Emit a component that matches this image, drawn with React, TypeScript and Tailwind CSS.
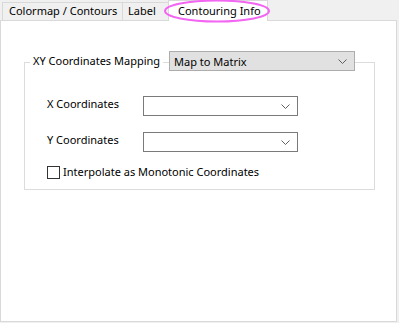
import React from "react";

function Chevron({ className = "" }: { className?: string }) {
  return (
    <svg width="9" height="5" viewBox="0 0 9 5" className={className}>
      <path d="M0.5 0.5 L4.5 4.5 L8.5 0.5" fill="none" stroke="#606060" strokeWidth="1" />
    </svg>
  );
}

function Combo({ value, className = "" }: { value?: string; className?: string }) {
  return (
    <div
      className={`flex h-[20px] shrink-0 items-center justify-between border pl-[4px] pr-[7px] ${className}`}
    >
      <span className="leading-none">{value ?? ""}</span>
      <Chevron />
    </div>
  );
}

export default function App() {
  return (
    <div
      className="relative h-[323px] w-[399px] overflow-hidden whitespace-nowrap bg-[#f0f0f0] text-[11px] text-black"
      style={{ fontFamily: '"Noto Sans", "Segoe UI", Arial, sans-serif' }}
    >
      {/* tab strip */}
      <div className="flex h-[20px] items-end pl-[2px]">
        <div className="flex h-[18px] w-[120px] shrink-0 items-center border-l border-t border-[#d9d9d9] bg-[#f0f0f0] pl-[6px]">
          Colormap / Contours
        </div>
        <div className="flex h-[18px] w-[46px] shrink-0 items-center border-l border-t border-[#d9d9d9] bg-[#f0f0f0] pl-[5px]">
          Label
        </div>
        <div className="relative z-10 -mb-px flex h-[21px] w-[100px] shrink-0 items-start border-x border-t border-[#d9d9d9] bg-white pl-[9px] pt-[2px]">
          Contouring Info
        </div>
      </div>

      {/* page */}
      <div className="h-[302px] w-[397px] border border-[#d9d9d9] bg-white pl-[23px] pt-[41px]">
        <div className="relative h-[128px] w-[351px] border border-[#dcdcdc] pl-[22px] pt-[33px]">
          <div className="absolute left-[5px] top-[-12px] flex items-center">
            <span className="w-[133px] bg-white px-[3px]">XY Coordinates Mapping</span>
            <Combo
              value="Map to Matrix"
              className="ml-[6px] w-[186px] border-[#adadad] bg-[#e1e1e1]"
            />
          </div>

          <div className="flex items-start">
            <span className="w-[96px] shrink-0 pt-[1px] leading-[14px]">X Coordinates</span>
            <Combo className="w-[155px] border-[#7a7a7a] bg-white" />
          </div>
          <div className="mt-[16px] flex items-start">
            <span className="w-[96px] shrink-0 pt-[1px] leading-[14px]">Y Coordinates</span>
            <Combo className="w-[155px] border-[#7a7a7a] bg-white" />
          </div>
          <div className="mt-[13px] flex items-center">
            <span className="h-[13px] w-[13px] shrink-0 border border-[#333333] bg-white" />
            <span className="ml-[3px] leading-[14px]">Interpolate as Monotonic Coordinates</span>
          </div>
        </div>
      </div>

      {/* highlight ring */}
      <svg className="pointer-events-none absolute left-0 top-0 z-20" width="399" height="30">
        <ellipse cx="217" cy="11" rx="52" ry="10.5" fill="none" stroke="#f266f2" strokeWidth="2" />
      </svg>
    </div>
  );
}
